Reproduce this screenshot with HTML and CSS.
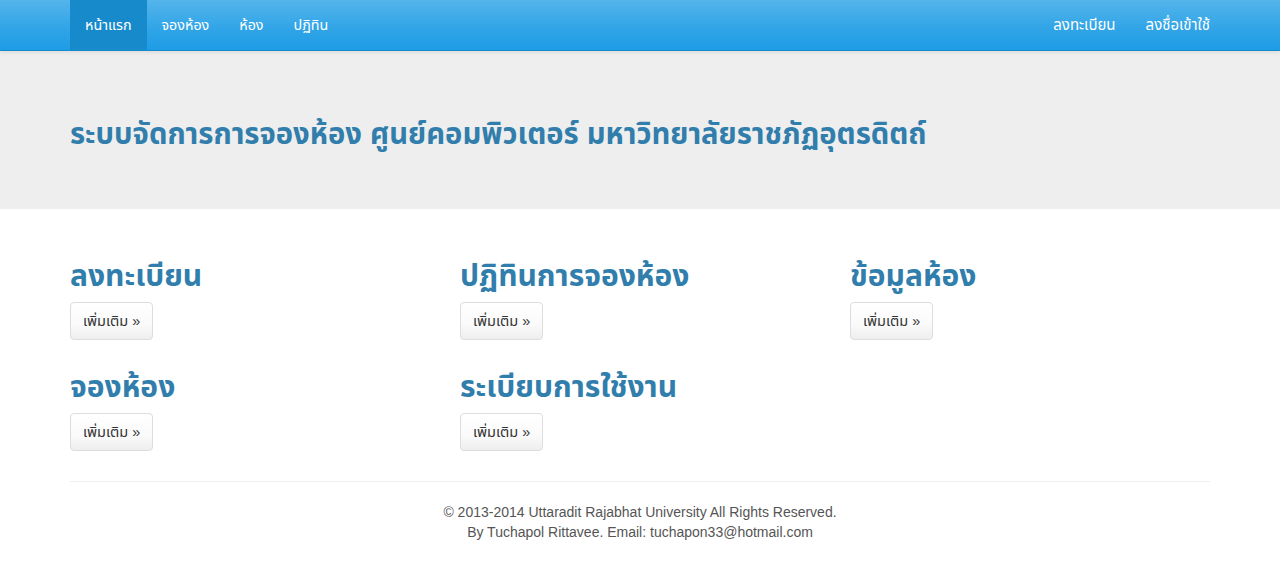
FILE: index.html
```html
<!DOCTYPE html>
<html lang="th">
<head>
<meta charset="utf-8">
<title>ระบบจัดการการจองห้อง</title>
<link rel="stylesheet" href="styles.css">
</head>
<body>
<nav class="navbar">
  <div class="container nav-inner">
    <ul class="nav">
      <li class="active"><a href="#">หน้าแรก</a></li>
      <li><a href="#">จองห้อง</a></li>
      <li><a href="#">ห้อง</a></li>
      <li><a href="#">ปฏิทิน</a></li>
    </ul>
    <ul class="nav nav-right">
      <li><a href="#">ลงทะเบียน</a></li>
      <li><a href="#">ลงชื่อเข้าใช้</a></li>
    </ul>
  </div>
</nav>
<div class="jumbotron">
  <div class="container">
    <h1>ระบบจัดการการจองห้อง ศูนย์คอมพิวเตอร์ มหาวิทยาลัยราชภัฏอุตรดิตถ์</h1>
  </div>
</div>
<div class="container">
  <div class="grid">
    <div class="col"><h2>ลงทะเบียน</h2><p><a class="btn" href="#">เพิ่มเติม »</a></p></div>
    <div class="col"><h2>ปฏิทินการจองห้อง</h2><p><a class="btn" href="#">เพิ่มเติม »</a></p></div>
    <div class="col"><h2>ข้อมูลห้อง</h2><p><a class="btn" href="#">เพิ่มเติม »</a></p></div>
    <div class="col"><h2>จองห้อง</h2><p><a class="btn" href="#">เพิ่มเติม »</a></p></div>
    <div class="col"><h2>ระเบียบการใช้งาน</h2><p><a class="btn" href="#">เพิ่มเติม »</a></p></div>
  </div>
  <hr class="rule">
  <footer class="footer">
    <p>© 2013-2014 Uttaradit Rajabhat University All Rights Reserved.<br>By Tuchapol Rittavee. Email: tuchapon33@hotmail.com</p>
  </footer>
</div>
</body>
</html>
```
FILE: styles.css
```css
* { box-sizing: border-box; }
html, body { margin: 0; padding: 0; }
body {
  font-family: "Liberation Sans", Tahoma, "Noto Sans Thai", "Noto Sans", sans-serif;
  font-size: 14px;
  line-height: 20px;
  color: #555555;
  background: #ffffff;
}
a { text-decoration: none; }
.container {
  width: 1170px;
  margin: 0 auto;
  padding: 0 15px;
}
.navbar {
  height: 51px;
  background: linear-gradient(#54b4eb, #2fa4e7 60%, #1d9ce5);
  border-bottom: 1px solid #178acc;
  box-shadow: 0 1px 4px rgba(0,0,0,0.1);
  position: relative;
}
.nav-inner {
  display: flex;
  justify-content: space-between;
  height: 50px;
}
.nav {
  list-style: none;
  margin: 0;
  padding: 0;
  display: flex;
}
.nav-right { margin-right: -15px; }
.nav a {
  display: block;
  padding: 15px;
  line-height: 20px;
  font-size: 14.3px;
  color: #ffffff;
}
.nav-right a { font-size: 15px; }
.nav .active a { background: #178acc; }
.jumbotron {
  background: #eeeeee;
  padding: 64px 0 56px;
  margin-bottom: 30px;
}
.jumbotron h1 {
  margin: 0;
  font-size: 29.2px;
  line-height: 38px;
  font-weight: bold;
  color: #317eac;
}
.grid {
  display: grid;
  grid-template-columns: repeat(3, 1fr);
  column-gap: 30px;
}
.col h2 {
  margin: 20px 0 10px;
  font-size: 30px;
  line-height: 33px;
  font-weight: bold;
  color: #317eac;
}
.col p { margin: 0 0 10px; }
.btn {
  display: inline-block;
  padding: 8px 12px;
  line-height: 20px;
  font-size: 14.5px;
  color: #333333;
  background: linear-gradient(#ffffff, #fafafa 60%, #eeeeee);
  border: 1px solid #dddddd;
  border-radius: 4px;
}
.rule {
  margin: 20px 0;
  border: 0;
  border-top: 1px solid #eeeeee;
}
.footer { text-align: center; }
.footer p { margin: 0; }
```
